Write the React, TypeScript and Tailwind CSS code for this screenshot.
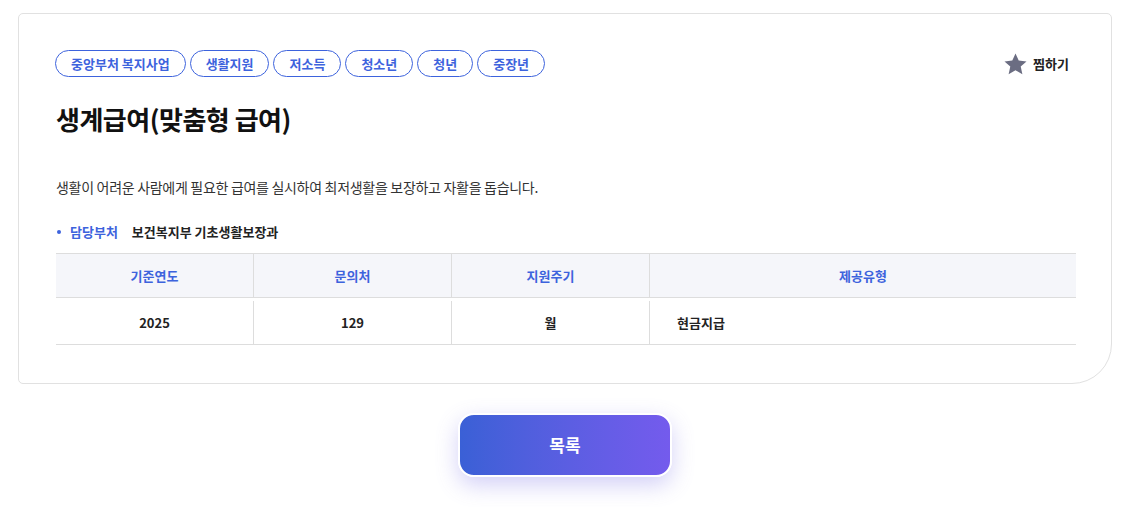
import React from "react";

const tags = ["중앙부처 복지사업", "생활지원", "저소득", "청소년", "청년", "중장년"];

const columns = [
  { label: "기준연도", value: "2025", align: "center" },
  { label: "문의처", value: "129", align: "center" },
  { label: "지원주기", value: "월", align: "center" },
  { label: "제공유형", value: "현금지급", align: "left" },
];

export default function App() {
  return (
    <div
      className="w-[1132px] h-[507px] bg-white pt-[13px] pl-[18px] pr-[20px]"
      style={{ fontFamily: '"Noto Sans CJK KR", "Noto Sans", sans-serif' }}
    >
      <section className="h-[371px] border border-[#e1e1e1] rounded-t-[5px] rounded-bl-[5px] rounded-br-[40px] pt-[36px] pl-[36px] pr-[35px]">
        <div className="flex items-center justify-between">
          <ul className="flex gap-[4px]">
            {tags.map((tag) => (
              <li
                key={tag}
                className="h-[27px] px-[15px] flex items-center rounded-full border border-[#3d63dd] text-[13px] font-bold text-[#3d63dd] leading-none"
              >
                {tag}
              </li>
            ))}
          </ul>
          <button className="flex items-center gap-[5px] mr-[7px] text-[13px] font-bold text-[#222]">
            <svg width="25" height="24" viewBox="0 0 24 24" fill="#6b6d82">
              <path d="M12 1.5l3.2 7.1 7.8.8-5.8 5.2 1.7 7.6L12 18.3l-6.9 3.9 1.7-7.6L1 9.4l7.8-.8z" />
            </svg>
            찜하기
          </button>
        </div>

        <h1 className="mt-[24px] ml-[1px] text-[26px] font-bold text-[#111] leading-[36px] tracking-[-0.5px]">
          생계급여(맞춤형 급여)
        </h1>

        <p className="mt-[40px] ml-[1px] text-[14px] text-[#333] leading-[20px] tracking-[-0.3px]">
          생활이 어려운 사람에게 필요한 급여를 실시하여 최저생활을 보장하고 자활을 돕습니다.
        </p>

        <div className="mt-[25px] ml-[1px] flex items-center text-[13px] font-bold leading-[20px]">
          <span className="w-[4px] h-[4px] rounded-full bg-[#3d63dd] ml-[1px] mr-[9px]" />
          <span className="text-[#3d63dd]">담당부처</span>
          <span className="ml-[14px] text-[#222]">보건복지부 기초생활보장과</span>
        </div>

        <div className="mt-[11px] ml-[1px] grid grid-cols-[197px_198px_198px_1fr] border-t border-[#dddddd] text-[13px] font-bold">
          {columns.map((c, i) => (
            <div
              key={c.label}
              className={`h-[44px] flex items-center justify-center bg-[#f5f6fa] text-[#3d63dd] border-b border-[#dddddd] ${i > 0 ? "border-l" : ""}`}
            >
              {c.label}
            </div>
          ))}
          {columns.map((c, i) => (
            <div key={c.value} className="h-[47px] pt-[3px] border-b border-[#dddddd]">
              <div
                className={`h-full flex items-center text-[#222] ${i > 0 ? "border-l border-[#dddddd]" : ""} ${c.align === "left" ? "pl-[27px]" : "justify-center"}`}
              >
                {c.value}
              </div>
            </div>
          ))}
        </div>
      </section>

      <div className="mt-[29px] flex justify-center">
        <button className="w-[214px] h-[64px] rounded-[16px] border-2 border-white bg-gradient-to-r from-[#3a60d6] to-[#745bed] text-white text-[17px] font-bold shadow-[0_8px_22px_rgba(110,100,230,0.3)]">
          목록
        </button>
      </div>
    </div>
  );
}
